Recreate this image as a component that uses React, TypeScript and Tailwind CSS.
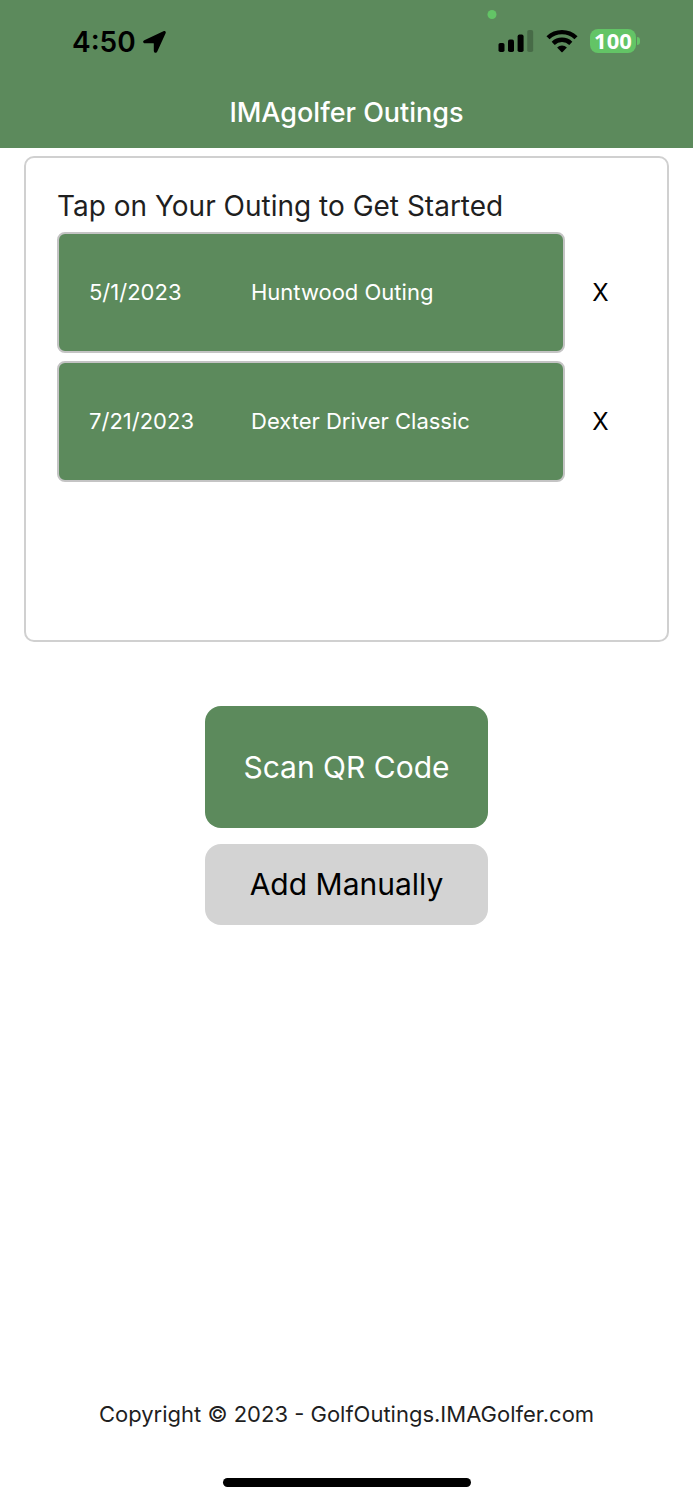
import React from "react";

type Outing = { date: string; name: string };

const outings: Outing[] = [
  { date: "5/1/2023", name: "Huntwood Outing" },
  { date: "7/21/2023", name: "Dexter Driver Classic" },
];

function LocationArrow() {
  return (
    <svg width="24" height="24" viewBox="0 0 24 24" aria-hidden="true">
      <path
        d="M1.3 10.2 20.4 1.2c1.6-.7 2.9.5 2.2 2.1L14.3 21.6c-.9 1.9-3.5 1.5-3.5-.8v-6.9c0-.5-.1-.6-.6-.6H2.1c-2.3 0-2.7-2.2-.8-3.1Z"
        fill="#000"
      />
    </svg>
  );
}

function SignalIcon() {
  return (
    <svg width="36" height="24" viewBox="0 0 36 24" aria-hidden="true">
      <rect x="0.5" y="14" width="6" height="9" rx="1.8" />
      <rect x="10" y="10.6" width="6" height="12.4" rx="1.8" />
      <rect x="19.6" y="5.6" width="6" height="17.4" rx="1.8" />
      <rect x="29.2" y="1" width="6" height="22" rx="1.8" fillOpacity="0.22" />
    </svg>
  );
}

function WifiIcon() {
  return (
    <svg width="32" height="24" viewBox="0 0 32 24" aria-hidden="true">
      <g fill="none" stroke="#000" strokeWidth="4.4">
        <path d="M2 8.8a20 20 0 0 1 28 0" />
        <path d="M7.2 14.4a12.6 12.6 0 0 1 17.6 0" />
      </g>
      <path d="M11.1 18.5a7.2 7.2 0 0 1 9.8 0L16.6 23a.9.9 0 0 1-1.2 0Z" />
    </svg>
  );
}

function Battery() {
  return (
    <div className="flex items-center gap-px">
      <div className="flex h-6 w-[46px] items-center justify-center rounded-lg bg-[#63c466] font-['Noto_Sans',sans-serif] text-[22px] leading-6 font-bold text-white">
        <span className="pb-0.5">100</span>
      </div>
      <div className="h-2 w-[3px] rounded-r-full bg-[#63c466]" />
    </div>
  );
}

function StatusBar() {
  return (
    <div className="flex h-[84px] items-center justify-between pr-[53px] pl-[72px]">
      <div className="flex items-center gap-[7px] text-[28px] leading-8 font-semibold text-black">
        <span>4:50</span>
        <LocationArrow />
      </div>
      <div className="flex items-center gap-3 pb-0.5">
        <SignalIcon />
        <WifiIcon />
        <Battery />
      </div>
    </div>
  );
}

function OutingRow({ outing }: { outing: Outing }) {
  return (
    <li className="flex">
      <button
        type="button"
        className="flex h-[121px] flex-1 items-center rounded-lg border-2 border-[#c4c4c4] bg-[#5c8a5c] px-[30px] text-left text-[22px] text-white"
      >
        <span className="w-[162px]">{outing.date}</span>
        <span>{outing.name}</span>
      </button>
      <button
        type="button"
        aria-label={`Remove ${outing.name}`}
        className="w-[71px] text-center text-[24px] text-black"
      >
        X
      </button>
    </li>
  );
}

export default function App() {
  return (
    <div className="flex min-h-screen flex-col bg-white font-[Inter,'Liberation_Sans',sans-serif] text-[#1f1f1f]">
      <header className="relative bg-[#5c8a5c] pb-[18px]">
        <span className="absolute top-[10px] left-[71%] size-[9px] -translate-x-1/2 rounded-full bg-[#63c466]" />
        <StatusBar />
        <h1 className="pt-3 text-center text-[27px] leading-[34px] font-medium text-white">
          IMAgolfer Outings
        </h1>
      </header>

      <main className="flex flex-1 flex-col items-center px-6 pt-2">
        <section className="min-h-[486px] w-full rounded-[10px] border-2 border-[#d0d0d0] px-[31px] pt-[30px]">
          <h2 className="mb-2 text-[28px] leading-9">
            Tap on Your Outing to Get Started
          </h2>
          <ul className="flex flex-col gap-2">
            {outings.map((outing) => (
              <OutingRow key={outing.name} outing={outing} />
            ))}
          </ul>
        </section>

        <div className="mt-16 flex w-[283px] flex-col gap-4 text-[30px]">
          <button
            type="button"
            className="h-[122px] rounded-2xl bg-[#5c8a5c] text-white"
          >
            Scan QR Code
          </button>
          <button
            type="button"
            className="h-[81px] rounded-2xl bg-[#d3d3d3] text-black"
          >
            Add Manually
          </button>
        </div>
      </main>

      <footer className="flex flex-col items-center gap-12 pb-[13px]">
        <p className="text-[22px] leading-8">
          Copyright © 2023 - GolfOutings.IMAGolfer.com
        </p>
        <div className="h-[9px] w-[248px] rounded-full bg-black" />
      </footer>
    </div>
  );
}
